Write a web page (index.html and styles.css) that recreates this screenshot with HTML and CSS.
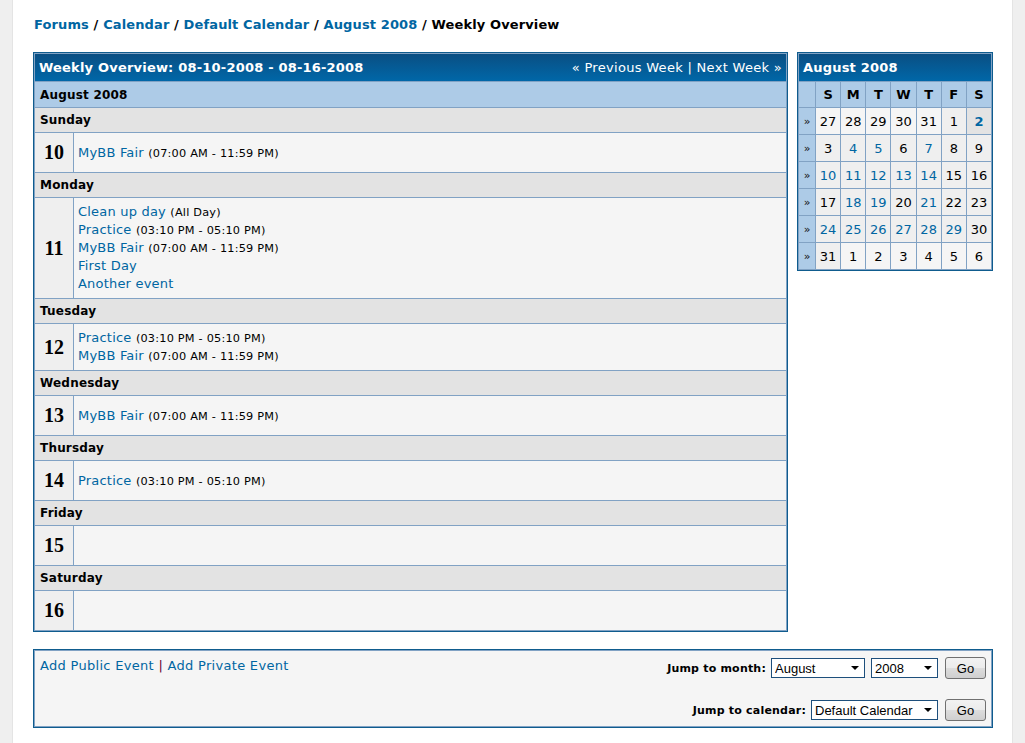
FILE: index.html
```html
<!DOCTYPE html>
<html>
<head>
<meta charset="utf-8">
<title>Weekly Overview</title>
<link rel="stylesheet" href="styles.css">
</head>
<body>
<div class="page">
  <div class="nav">
    <a href="#">Forums</a> / <a href="#">Calendar</a> / <a href="#">Default Calendar</a> / <a href="#">August 2008</a> / <span class="active">Weekly Overview</span>
  </div>

  <div class="layout">
    <table class="tborder week">
      <tr>
        <td class="thead" colspan="2">
          <div class="thead-row">
            <strong>Weekly Overview: 08-10-2008 - 08-16-2008</strong>
            <span class="weeknav"><a href="#">« Previous Week</a> | <a href="#">Next Week »</a></span>
          </div>
        </td>
      </tr>
      <tr><td class="tcat" colspan="2">August 2008</td></tr>

      <tr><td class="sep" colspan="2">Sunday</td></tr>
      <tr>
        <td class="daynum">10</td>
        <td class="events"><div class="ev"><a href="#">MyBB Fair</a> <span class="small">(07:00 AM - 11:59 PM)</span></div></td>
      </tr>

      <tr><td class="sep" colspan="2">Monday</td></tr>
      <tr>
        <td class="daynum">11</td>
        <td class="events">
          <div class="ev"><a href="#">Clean up day</a> <span class="small">(All Day)</span></div>
          <div class="ev"><a href="#">Practice</a> <span class="small">(03:10 PM - 05:10 PM)</span></div>
          <div class="ev"><a href="#">MyBB Fair</a> <span class="small">(07:00 AM - 11:59 PM)</span></div>
          <div class="ev"><a href="#">First Day</a></div>
          <div class="ev"><a href="#">Another event</a></div>
        </td>
      </tr>

      <tr><td class="sep" colspan="2">Tuesday</td></tr>
      <tr>
        <td class="daynum">12</td>
        <td class="events">
          <div class="ev"><a href="#">Practice</a> <span class="small">(03:10 PM - 05:10 PM)</span></div>
          <div class="ev"><a href="#">MyBB Fair</a> <span class="small">(07:00 AM - 11:59 PM)</span></div>
        </td>
      </tr>

      <tr><td class="sep" colspan="2">Wednesday</td></tr>
      <tr>
        <td class="daynum">13</td>
        <td class="events"><div class="ev"><a href="#">MyBB Fair</a> <span class="small">(07:00 AM - 11:59 PM)</span></div></td>
      </tr>

      <tr><td class="sep" colspan="2">Thursday</td></tr>
      <tr>
        <td class="daynum">14</td>
        <td class="events"><div class="ev"><a href="#">Practice</a> <span class="small">(03:10 PM - 05:10 PM)</span></div></td>
      </tr>

      <tr><td class="sep" colspan="2">Friday</td></tr>
      <tr>
        <td class="daynum">15</td>
        <td class="events"></td>
      </tr>

      <tr><td class="sep" colspan="2">Saturday</td></tr>
      <tr>
        <td class="daynum">16</td>
        <td class="events"></td>
      </tr>
    </table>

    <table class="tborder mini">
      <colgroup><col class="wkcol"><col><col><col><col><col><col><col></colgroup>
      <tr><td class="thead" colspan="8"><strong>August 2008</strong></td></tr>
      <tr class="dow">
        <td class="tcat"></td><td class="tcat">S</td><td class="tcat">M</td><td class="tcat">T</td><td class="tcat">W</td><td class="tcat">T</td><td class="tcat">F</td><td class="tcat">S</td>
      </tr>
      <tr>
        <td class="wk">»</td>
        <td class="out">27</td><td class="out">28</td><td class="out">29</td><td class="out">30</td><td class="out">31</td><td class="in">1</td><td class="today"><a href="#">2</a></td>
      </tr>
      <tr>
        <td class="wk">»</td>
        <td class="in">3</td><td class="in"><a href="#">4</a></td><td class="in"><a href="#">5</a></td><td class="in">6</td><td class="in"><a href="#">7</a></td><td class="in">8</td><td class="in">9</td>
      </tr>
      <tr>
        <td class="wk">»</td>
        <td class="in"><a href="#">10</a></td><td class="in"><a href="#">11</a></td><td class="in"><a href="#">12</a></td><td class="in"><a href="#">13</a></td><td class="in"><a href="#">14</a></td><td class="in">15</td><td class="in">16</td>
      </tr>
      <tr>
        <td class="wk">»</td>
        <td class="in">17</td><td class="in"><a href="#">18</a></td><td class="in"><a href="#">19</a></td><td class="in">20</td><td class="in"><a href="#">21</a></td><td class="in">22</td><td class="in">23</td>
      </tr>
      <tr>
        <td class="wk">»</td>
        <td class="in"><a href="#">24</a></td><td class="in"><a href="#">25</a></td><td class="in"><a href="#">26</a></td><td class="in"><a href="#">27</a></td><td class="in"><a href="#">28</a></td><td class="in"><a href="#">29</a></td><td class="in">30</td>
      </tr>
      <tr>
        <td class="wk">»</td>
        <td class="in">31</td><td class="out">1</td><td class="out">2</td><td class="out">3</td><td class="out">4</td><td class="out">5</td><td class="out">6</td>
      </tr>
    </table>
  </div>

  <table class="tborder foot">
    <tr>
      <td class="footcell">
        <div class="foot-row">
          <div class="addlinks"><a href="#">Add Public Event</a> <span class="pipe">|</span> <a href="#">Add Private Event</a></div>
          <div class="jumps">
            <form class="jump">
              <label class="jlabel">Jump to month:</label>
              <span class="sel w-month"><select><option>August</option></select></span>
              <span class="sel w-year"><select><option>2008</option></select></span>
              <button type="button" class="go">Go</button>
            </form>
            <form class="jump">
              <label class="jlabel">Jump to calendar:</label>
              <span class="sel w-cal"><select><option>Default Calendar</option></select></span>
              <button type="button" class="go">Go</button>
            </form>
          </div>
        </div>
      </td>
    </tr>
  </table>
</div>
</body>
</html>
```

FILE: styles.css
```css
html, body {
  margin: 0;
  padding: 0;
}
body {
  background: #efefef;
  font-family: "DejaVu Sans", Verdana, sans-serif;
  font-size: 13px;
  letter-spacing: 0.2px;
  color: #000;
}
a {
  color: #0066a2;
  text-decoration: none;
}
.page {
  margin: 0 12px;
  min-height: 743px;
  box-sizing: border-box;
  background: #fff;
  border-left: 1px solid #e4e4e4;
  border-right: 1px solid #e4e4e4;
  padding: 17px 19px 0 20px;
}
.nav {
  font-weight: bold;
  font-size: 13px;
  line-height: 16px;
  letter-spacing: 0.12px;
  padding-left: 1px;
  margin-bottom: 19px;
}
.nav .active { color: #000; }

.layout {
  display: flex;
  align-items: flex-start;
  gap: 9px;
}

.tborder {
  border-collapse: separate;
  border-spacing: 1px;
  border: 1px solid #0f5c8e;
  background: #81a2c4;
}
.tborder td {
  padding: 0;
}
.thead {
  background: linear-gradient(#0a4f83, #0067a8);
  color: #fff;
  font-weight: bold;
  height: 26px;
  padding: 1px 4px 0 4px !important;
  line-height: 16px;
}
.thead-row {
  display: flex;
  justify-content: space-between;
  align-items: center;
}
.weeknav {
  font-weight: normal;
  color: #fff;
  letter-spacing: 0.3px;
}
.weeknav a { color: #fff; }

.tcat {
  background: #adcbe7;
  font-weight: bold;
  font-size: 12px;
  height: 25px;
  padding: 0 5px !important;
}

.week {
  width: 755px;
  flex: none;
}
.sep {
  background: #e3e3e3;
  font-weight: bold;
  font-size: 12px;
  height: 24px;
  padding: 0 5px !important;
}
.daynum {
  width: 38px;
  box-sizing: border-box;
  background: #efefef;
  text-align: center;
  font-family: "Liberation Serif", "Times New Roman", serif;
  font-weight: bold;
  font-size: 20px;
  letter-spacing: 0;
  line-height: 29px;
  height: 39px;
  padding: 5px 0 !important;
}
.events {
  background: #f5f5f5;
  line-height: 18px;
  padding: 5px 4px !important;
  vertical-align: middle;
}
.ev {
  height: 18px;
  white-space: nowrap;
}
.small {
  font-size: 11.3px;
  line-height: 1;
}

.mini {
  width: 196px;
  flex: none;
  table-layout: fixed;
  text-align: center;
  letter-spacing: 0;
}
.mini .wkcol { width: 16px; }
.mini .thead {
  text-align: left;
  letter-spacing: 0.2px;
}
.mini .dow .tcat {
  font-size: 13px;
  text-align: center;
  padding: 0 !important;
}
.mini tr td.in,
.mini tr td.out,
.mini tr td.today,
.mini tr td.wk {
  height: 26px;
}
.mini .wk {
  background: #adcbe7;
  font-size: 11px;
  color: #111;
}
.mini .in { background: #efefef; }
.mini .out { background: #f5f5f5; }
.mini .today { background: #e3e3e3; }
.mini .today a { font-weight: bold; }

.foot {
  width: 960px;
  margin-top: 17px;
}
.footcell {
  background: #f5f5f5;
  padding: 6px 5px 5px 5px !important;
}
.foot-row {
  display: flex;
  justify-content: space-between;
  align-items: flex-start;
}
.addlinks {
  line-height: 16px;
  padding-top: 1px;
  letter-spacing: 0.3px;
}
.pipe { color: #660033; }
.jumps {
  display: flex;
  flex-direction: column;
  align-items: flex-end;
  gap: 20px;
}
.jump {
  display: flex;
  align-items: center;
  margin: 0;
  height: 22px;
}
.jlabel {
  font-weight: bold;
  font-size: 11px;
  margin-right: 5px;
}
.sel {
  position: relative;
  display: inline-block;
  height: 20px;
  margin-right: 6px;
}
.sel select {
  appearance: none;
  -webkit-appearance: none;
  box-sizing: border-box;
  width: 100%;
  height: 20px;
  border: 1px solid #1d4f7c;
  background: #fff;
  font-family: "Liberation Sans", Arial, sans-serif;
  font-size: 13px;
  letter-spacing: 0;
  padding: 0 0 0 3px;
  color: #000;
  border-radius: 0;
}
.sel::after {
  content: "";
  position: absolute;
  right: 6px;
  top: 8px;
  border-left: 4px solid transparent;
  border-right: 4px solid transparent;
  border-top: 4px solid #000;
  pointer-events: none;
}
.w-month { width: 94px; }
.w-year { width: 67px; margin-right: 7px; }
.w-cal { width: 127px; margin-right: 7px; }
.go {
  width: 41px;
  height: 22px;
  box-sizing: border-box;
  border: 1px solid #707070;
  border-radius: 3px;
  background: linear-gradient(#f2f2f2 0%, #ebebeb 50%, #dddddd 51%, #cfcfcf 100%);
  font-family: "Liberation Sans", Arial, sans-serif;
  font-size: 13px;
  letter-spacing: 0;
  padding: 0;
  color: #000;
}
```
